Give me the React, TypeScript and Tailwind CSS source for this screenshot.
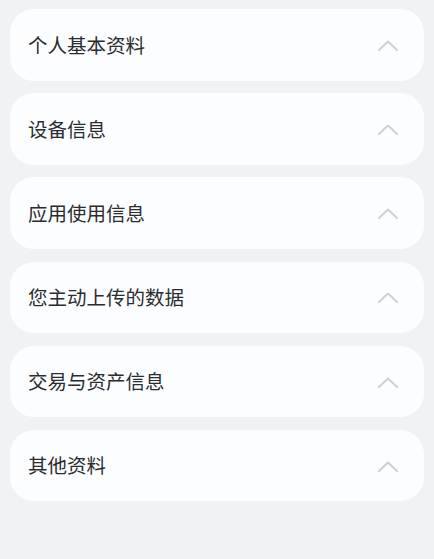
const SECTIONS = ['个人基本资料', '设备信息', '应用使用信息', '您主动上传的数据', '交易与资产信息', '其他资料']

function ChevronUp() {
  return (
    <svg width="22" height="12" viewBox="0 0 22 12" fill="none" className="shrink-0">
      <path d="M2 11 L11 2.5 L20 11" stroke="#cfd0d3" strokeWidth="2" strokeLinecap="round" strokeLinejoin="round" />
    </svg>
  )
}

export default function App() {
  return (
    <div
      className="min-h-[559px] w-full bg-[#f1f2f4] px-[10px] pt-[9px] flex flex-col gap-[12.7px]"
      style={{ fontFamily: '"Noto Sans CJK SC", "Noto Sans", sans-serif' }}
    >
      {SECTIONS.map((title) => (
        <div
          key={title}
          className="h-[71.5px] rounded-[24px] bg-[#fcfdff] flex items-center justify-between pl-[18px] pr-[25px]"
        >
          <span className="text-[19.5px] text-[#2a2c2f] leading-none -mt-[1px]">{title}</span>
          <ChevronUp />
        </div>
      ))}
    </div>
  )
}
